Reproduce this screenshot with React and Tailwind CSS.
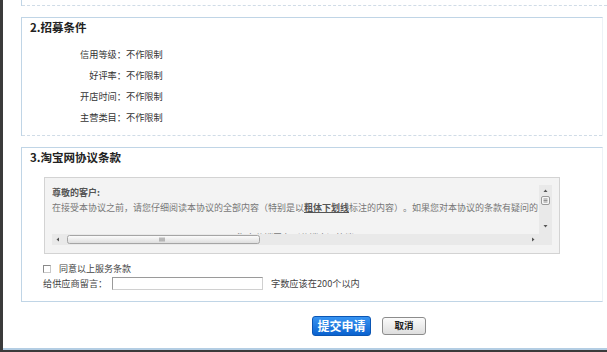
import React from "react";

const rows = [
  ["信用等级：", "不作限制"],
  ["好评率：", "不作限制"],
  ["开店时间：", "不作限制"],
  ["主营类目：", "不作限制"],
];

function VScroll() {
  return (
    <svg width="13" height="49" viewBox="0 0 13 49" className="block">
      <rect x="0" y="0" width="13" height="49" fill="#e9e9e9" />
      <path d="M4.5 7 L6.5 4.5 L8.5 7 Z" fill="#555" />
      <rect x="2.5" y="11.5" width="8" height="8" rx="1.5" fill="#f7f7f7" stroke="#9a9a9a" />
      <line x1="4.5" y1="14" x2="8.5" y2="14" stroke="#777" strokeWidth="0.8" />
      <line x1="4.5" y1="15.5" x2="8.5" y2="15.5" stroke="#777" strokeWidth="0.8" />
      <line x1="4.5" y1="17" x2="8.5" y2="17" stroke="#777" strokeWidth="0.8" />
      <path d="M4.5 40 L8.5 40 L6.5 42.5 Z" fill="#555" />
    </svg>
  );
}

function HScroll() {
  return (
    <svg width="487" height="11" viewBox="0 0 487 11" className="block">
      <defs>
        <linearGradient id="th" x1="0" y1="0" x2="0" y2="1">
          <stop offset="0" stopColor="#fdfdfd" />
          <stop offset="1" stopColor="#dcdcdc" />
        </linearGradient>
      </defs>
      <rect x="0" y="0" width="487" height="11" fill="#e9e9e9" />
      <path d="M7 3.5 L4.5 5.5 L7 7.5 Z" fill="#555" />
      <rect x="15.5" y="1.5" width="192" height="8" rx="2" fill="url(#th)" stroke="#a5a5a5" />
      <line x1="108" y1="3.5" x2="108" y2="7.5" stroke="#777" strokeWidth="0.9" />
      <line x1="110" y1="3.5" x2="110" y2="7.5" stroke="#777" strokeWidth="0.9" />
      <line x1="112" y1="3.5" x2="112" y2="7.5" stroke="#777" strokeWidth="0.9" />
      <path d="M480 3.5 L482.5 5.5 L480 7.5 Z" fill="#555" />
    </svg>
  );
}

export default function App() {
  return (
    <div className="w-[607px] h-[352px] flex flex-col bg-[#3b3b3b] overflow-hidden font-['Noto_Sans_CJK_SC','Noto_Sans',sans-serif] [text-spacing-trim:space-all]">
      <div className="h-[350px] flex">
        <div className="w-[3px] bg-[#3b3b3b]" />
        <div className="flex-1 flex flex-col bg-white border-b-2 border-[#b3cde3]">
          {/* previous box remnant */}
          <div className="ml-[18px] h-[6px] border-l border-[#c0d5e6] flex flex-col justify-end">
            <div className="border-b border-dashed border-[#d0dce7]" />
          </div>

          {/* box 2 */}
          <div className="mt-[11px] ml-[18px] w-[582px] border-t border-l border-r border-[#c0d5e6] border-r-[#edf2f6]">
            <div className="pl-[8px] text-[11.5px] leading-[18px] font-bold text-[#222]">2.招募条件</div>
            <div className="mt-[8px] flex flex-col">
              {rows.map(([l, v]) => (
                <div key={l} className="flex h-[21px] items-center text-[9.2px] text-[#333]">
                  <span className="w-[104px] text-right">{l}</span>
                  <span>{v}</span>
                </div>
              ))}
            </div>
            <div className="h-[7px]" />
            <div className="border-b border-dashed border-[#d0dce7]" />
          </div>

          {/* box 3 */}
          <div className="mt-[11px] ml-[18px] w-[582px] border border-[#c0d5e6] border-r-[#edf2f6] pb-[10px]">
            <div className="pl-[8px] text-[11.5px] leading-[18px] font-bold text-[#222]">3.淘宝网协议条款</div>
            <div className="mt-[11px] ml-[22px] w-[516px] h-[77px] border border-[#d3d3d3] bg-[#f3f3f3] pt-[7px] px-[7px] pb-[8px]">
              <div className="flex flex-col w-[500px] h-[60px]">
                <div className="flex h-[49px]">
                  <div className="w-[487px] h-[49px] overflow-hidden text-[9px] leading-[15px] text-[#777] whitespace-nowrap">
                    <div className="font-bold text-[#555]">尊敬的客户:</div>
                    <div>
                      在接受本协议之前，请您仔细阅读本协议的全部内容（特别是以
                      <span className="font-bold underline text-[#555]">粗体下划线</span>
                      标注的内容）。如果您对本协议的条款有疑问的，请通过淘宝客服渠道进行询问。
                    </div>
                    <div className="h-[15px]" />
                    <div className="w-[487px] text-center">淘宝分销平台（分销商）协议</div>
                  </div>
                  <VScroll />
                </div>
                <div className="flex h-[11px]">
                  <HScroll />
                  <div className="w-[13px] h-[11px] bg-[#e9e9e9]" />
                </div>
              </div>
            </div>

            <div className="mt-[8px] ml-[21px] h-[14px] flex items-center text-[9px] text-[#444]">
              <div className="w-[8px] h-[8px] border border-[#8a8a8a] border-r-[#c8c8c8] border-b-[#c8c8c8] bg-white" />
              <span className="ml-[8px]">同意以上服务条款</span>
            </div>
            <div className="ml-[21px] h-[15px] flex items-center text-[9.2px] text-[#444]">
              <span className="w-[69px]">给供应商留言：</span>
              <div className="w-[151px] h-[13px] border border-[#9a9a9a] border-r-[#d0d0d0] border-b-[#d0d0d0] bg-white" />
              <span className="ml-[8px]">字数应该在200个以内</span>
            </div>
          </div>

          {/* buttons */}
          <div className="mt-[14px] pl-[309px] flex items-center gap-[11px]">
            <div className="w-[59px] h-[20px] rounded-[3px] border border-[#0b56b4] bg-gradient-to-b from-[#3794f2] to-[#0a62cf] flex items-center justify-center text-white text-[12px] font-bold leading-none">
              提交申请
            </div>
            <div className="w-[44px] h-[18px] rounded-[3px] border border-[#8c8c8c] bg-gradient-to-b from-[#fbfbfb] to-[#dedede] flex items-center justify-center text-[#222] text-[9.5px] font-bold leading-none">
              取消
            </div>
          </div>
        </div>
      </div>
    </div>
  );
}
